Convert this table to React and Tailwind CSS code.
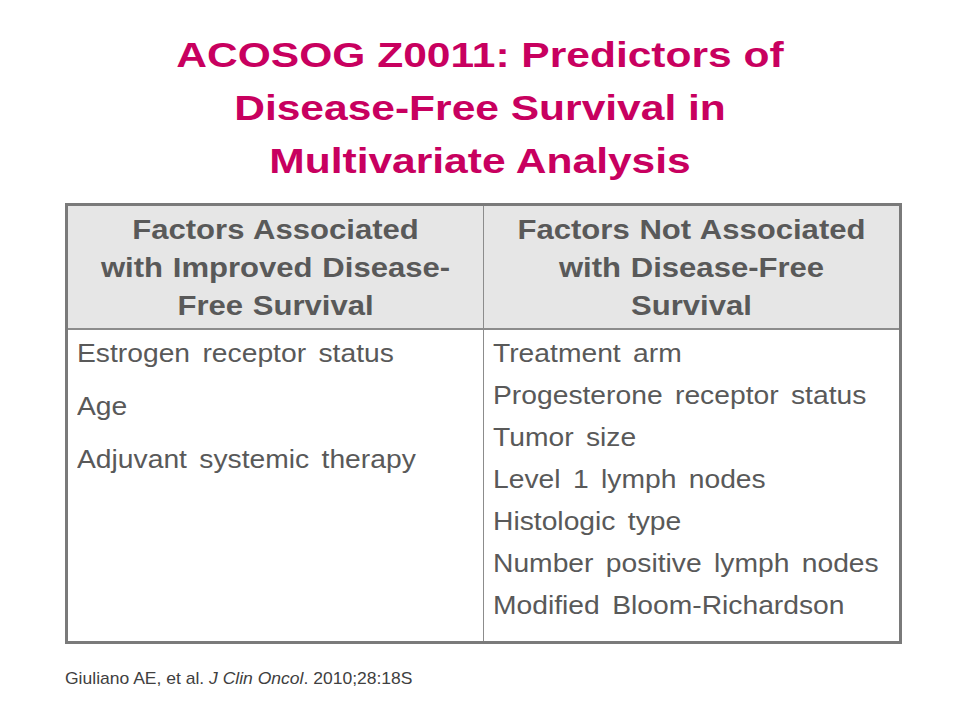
export default function App() {
  const left = ["Estrogen receptor status", "Age", "Adjuvant systemic therapy"];
  const right = [
    "Treatment arm",
    "Progesterone receptor status",
    "Tumor size",
    "Level 1 lymph nodes",
    "Histologic type",
    "Number positive lymph nodes",
    "Modified Bloom-Richardson",
  ];
  const head = "block w-full text-center scale-x-[1.15] origin-center";
  return (
    <div className="w-[960px] h-[720px] bg-white overflow-hidden flex flex-col" style={{ fontFamily: '"Liberation Sans", Arial, sans-serif' }}>
      <h1 className="pt-[28px] text-center text-[35px] leading-[53px] font-bold text-[#c8005f]">
        <span className="block scale-x-[1.215] origin-center">ACOSOG Z0011: Predictors of</span>
        <span className="block scale-x-[1.215] origin-center">Disease-Free Survival in</span>
        <span className="block scale-x-[1.215] origin-center">Multivariate Analysis</span>
      </h1>
      <div className="ml-[65px] mt-[16px] w-[837px] h-[441px] border-[3px] border-[#7a7a7a] grid grid-cols-[416px_1fr] grid-rows-[124px_1fr] text-[#595959]">
        <div className="bg-[#e6e6e6] border-r border-b-2 border-[#8c8c8c] flex flex-col pt-[5px] text-[27px] leading-[38px] font-bold [word-spacing:1px]">
          <span className={head}>Factors Associated</span>
          <span className={head}>with Improved Disease-</span>
          <span className={head}>Free Survival</span>
        </div>
        <div className="bg-[#e6e6e6] border-b-2 border-[#8c8c8c] flex flex-col pt-[5px] text-[27px] leading-[38px] font-bold [word-spacing:1px]">
          <span className={head}>Factors Not Associated</span>
          <span className={head}>with Disease-Free</span>
          <span className={head}>Survival</span>
        </div>
        <div className="border-r border-[#8c8c8c] pl-[9px] pt-[6px] flex flex-col text-[25px] [word-spacing:4px]">
          {left.map((t) => (
            <span key={t} className="block leading-[34px] mb-[19px] scale-x-[1.13] origin-left whitespace-nowrap">{t}</span>
          ))}
        </div>
        <div className="pl-[9px] pt-[6px] flex flex-col text-[25px] [word-spacing:4px]">
          {right.map((t) => (
            <span key={t} className="block leading-[34px] mb-[8px] scale-x-[1.13] origin-left whitespace-nowrap">{t}</span>
          ))}
        </div>
      </div>
      <div className="ml-[65px] mt-[22px] text-[17px] text-[#404040] scale-x-[1.03] origin-left">
        Giuliano AE, et al. <i>J Clin Oncol</i>. 2010;28:18S
      </div>
    </div>
  );
}
